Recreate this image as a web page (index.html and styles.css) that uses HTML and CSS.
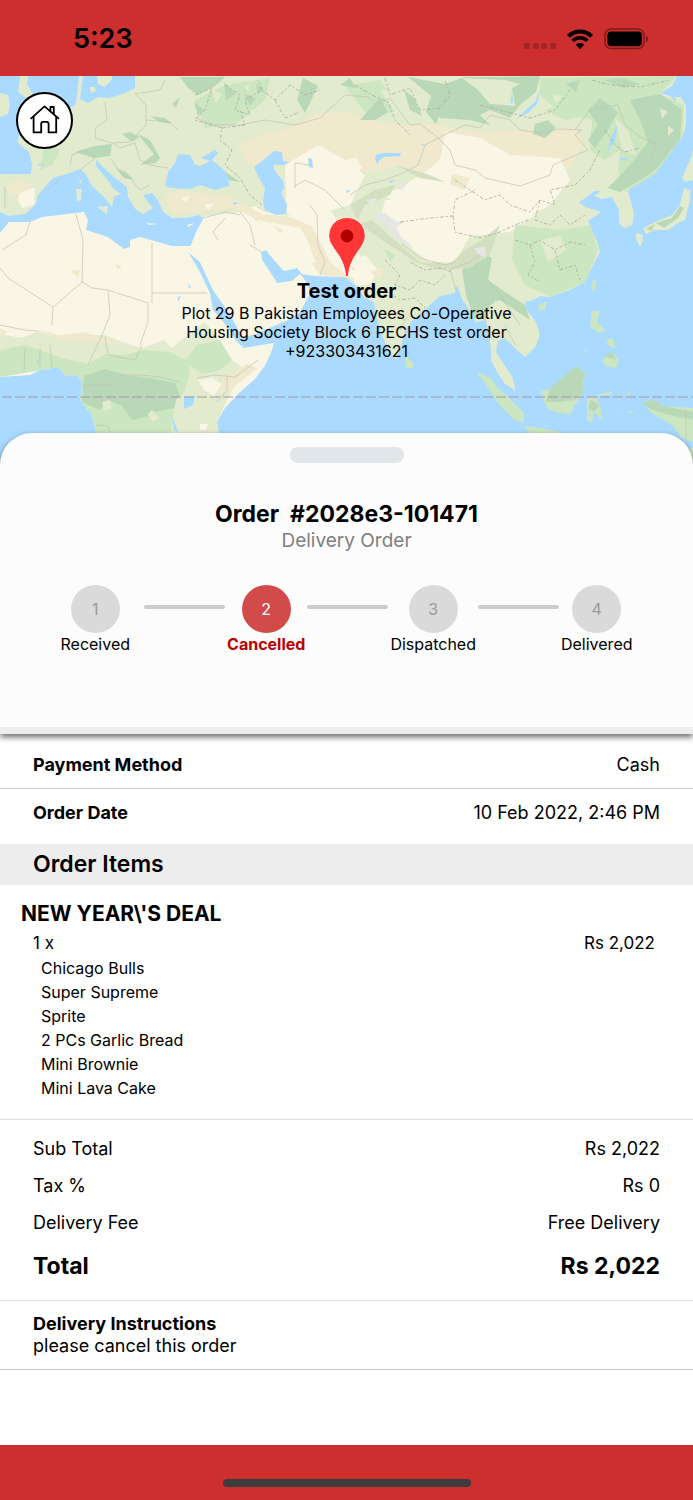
FILE: index.html
```
<!DOCTYPE html>
<html lang="en">
<head>
  <meta charset="utf-8">
  <meta name="viewport" content="width=device-width, initial-scale=1">
  <title>Order Status</title>
  <link rel="stylesheet" href="styles.css">
</head>
<body>
  <header class="status-bar">
    <span class="time">5:23</span>
    <div class="status-icons">
      <svg width="32" height="6" viewBox="0 0 32 6" fill="#a02524">
        <rect x="0" y="0" width="6" height="6" rx="2"/>
        <rect x="9" y="0" width="6" height="6" rx="2"/>
        <rect x="17" y="0" width="6" height="6" rx="2"/>
        <rect x="26" y="0" width="6" height="6" rx="2"/>
      </svg>
      <svg class="wifi" width="28" height="21" viewBox="0 0 28 21">
        <path d="M2.4 7.2C9 .8 19 .8 25.6 7.2" fill="none" stroke="#000" stroke-width="4"/>
        <path d="M6.6 11.8C10.8 7.8 17.2 7.8 21.4 11.8" fill="none" stroke="#000" stroke-width="3.6"/>
        <path d="M9.6 15.6C12.2 13.3 15.8 13.3 18.4 15.6L14 20.2Z"/>
      </svg>
      <svg width="45" height="22" viewBox="0 0 45 22">
        <rect x="1" y="1" width="39" height="19.5" rx="6" fill="none" stroke="#7f1c1b" stroke-width="1.6"/>
        <rect x="3.4" y="3.4" width="34.4" height="14.8" rx="3.6"/>
        <path d="M42 7.4C44.8 8.6 44.8 13 42 14.2Z" fill="#7f1c1b"/>
      </svg>
    </div>
  </header>

  <main>
    <section class="map">
      <svg class="map-image" viewBox="0 76 693 394" preserveAspectRatio="xMidYMin slice">
        <rect x="0" y="76" width="693" height="394" fill="#aadaff"/>

        <!-- Europe and Asia -->
        <path fill="#e2ebce" d="M10 76H677L672 86L661 93L670 96L675 101L681 98L686 105L686 125L682 137L674 148L662 164L654 174L646 178L635 181L628 191L632 205L634 214L632 225L625 228L619 224L619 210L612 197L602 199L594 196L601 191L594 191L587 197L579 202L585 207L601 212L588 221L592 230L598 244L600 252L593 265L585 282L570 290L550 297L540 296L534 300L525 302L526 309L536 322L540 334L536 346L525 357L519 352L505 338L498 341L496 352L505 366L512 376L516 391L505 384L497 372L491 360L491 352L489 335L486 320L476 322L468 308L462 299L457 285L455 293L440 296L430 305L412 321L405 330L401 346L396 359L390 354L382 335L376 315L374 302L364 297L357 287L345 277L315 276L302 274L297 268L284 271L274 260L266 250L261 252L262 260L270 272L277 283L292 281L300 274L307 283L310 293L300 312L288 320L262 331L243 338L232 318L222 303L213 290L200 262L188 252L193 246L203 218L199 215L185 218L172 218L163 212L158 200L152 193L143 195L148 202L153 208L143 214L136 210L128 197L127 187L115 178L104 168L96 160L96 166L106 178L115 190L121 194L114 196L112 207L103 196L92 186L85 173L80 169L70 173L53 178L38 195L36 204L25 214L9 216L0 212V174L31 174L32 164L29 152L17 142L19 136L40 130L60 115L76 104L79 76H10Z"/>

        <!-- Africa -->
        <path fill="#faf6e6" d="M0 233L9 222L30 222L42 217L84 212L88 220L86 230L108 237L124 249L130 247V240L140 237L155 241L172 246L193 246L188 252L200 272L210 293L213 310L226 325L237 342L244 348L274 343L271 353L264 367L255 379L238 394L225 408L217 422L220 440L98 440L92 415L80 400L83 383L77 375L66 376L59 367L40 370L30 375L0 377Z"/>
        <path fill="#e2ebce" d="M0 334L22 338L38 331L58 338L85 335L105 335L128 344L142 348L164 340L172 348L193 330L205 322L222 344L232 360L246 370L232 390L217 422L220 440L98 440L92 415L80 400L83 383L77 375L66 376L59 367L0 377Z"/>
        <path fill="#cbe6c0" d="M0 350L25 345L62 358L88 364L105 354L125 355L145 350L170 352L186 360L197 345L220 340L232 360L220 370L195 376L186 390L175 405L170 440L98 440L92 415L80 400L83 383L77 375L66 376L59 367L0 377Z"/>
        <path fill="#b8d8b8" d="M84 376L105 369L125 375L150 378L175 383L180 396L174 408L155 412L150 416L132 420L122 406L108 400L100 410L82 402Z"/>
        <path fill="#e2ebce" d="M190 366L200 372L212 378L228 372L222 392L216 408L214 440L176 440L172 420L176 400L184 392L188 380ZM102 402L110 400L112 408L104 411ZM148 414L152 410L160 418L152 422Z"/>
        <path fill="#f1e9cd" d="M0 328L8 332L0 336ZM40 330L60 335L85 332L100 338L130 345L100 342L60 340ZM70 271L80 270L78 277ZM115 264L122 266L118 270ZM208 268L222 276L224 292L232 300L224 304L214 290ZM232 374L246 364L258 368L240 382L220 396L222 380Z"/>
        <path fill="#faf6e6" d="M198 380L212 378L222 384L214 396L204 390ZM200 424L208 424L206 430L200 430Z"/>
        <path fill="#aadaff" d="M184 397L195 396L193 405L184 409ZM172 415L178 432L174 430ZM188 283L191 287L189 289ZM178 297L181 296L178 302ZM36 359L39 361L38 366Z"/>

        <!-- deserts and steppe -->
        <path fill="#faf6e6" d="M197 230L205 216L240 212L254 206L265 212L287 216L310 205L330 210L345 232L360 255L365 280L345 277L315 276L302 274L297 268L284 271L274 260L266 250L261 252L262 260L270 272L277 283L292 281L300 274L307 283L310 293L300 312L288 320L262 331L243 338L232 318L222 303L213 290L200 262L188 252Z"/>
        <path fill="#f1e9cd" d="M236 146L262 135L290 128L316 114L346 112L380 122L404 126L430 124L480 132L525 130L575 128L584 144L560 180L545 200L520 215L480 200L430 180L400 165L380 170L350 172L320 165L290 165L255 165Z"/>
        <path fill="#f1e9cd" d="M165 196L180 190L202 194L226 196L240 202L262 214L287 216L312 226L330 262L350 278L320 275L305 255L270 232L250 216L232 208L200 212L174 214L168 206Z"/>
        <path fill="#faf6e6" d="M285 165L318 145L345 160L365 175L350 205L315 215L287 214L286 190ZM445 132L480 138L510 155L560 158L570 180L550 205L525 218L480 220L450 205L400 205L385 195L420 176L440 160ZM385 200L455 195L500 205L535 215L510 232L470 236L455 262L430 262L400 240L380 220ZM258 220L300 228L320 260L300 268L275 255ZM350 262L365 255L378 270L370 285L355 285ZM346 160L356 158L362 168L350 176Z"/>
        <path fill="#f1e9cd" d="M452 174L470 178L464 190L450 184ZM306 236L318 240L326 252L322 270L314 258ZM274 226L284 230L280 234ZM370 272L384 268L380 280Z"/>
        <path fill="#faf6e6" d="M20 190L35 188L34 205L22 208L18 200ZM180 198L190 196L186 202ZM204 204L214 204L208 210Z"/>
        <path fill="#f1e9cd" d="M5 186L18 180L32 184L28 190L14 196ZM240 146L252 138L260 152L248 165Z"/>

        <!-- forests -->
        <path fill="#cbe6c0" d="M195 100L225 85L270 78L265 100L235 125L205 128ZM540 78L677 76L660 94L684 105L682 137L655 174L625 192L618 170L590 150L592 120L560 112L540 95ZM515 225L560 230L590 225L598 250L585 282L550 297L525 285L512 260ZM45 143L60 150L52 165L40 170ZM385 250L370 240L395 255L390 262ZM545 110L580 96L590 115L565 120ZM345 86L380 80L400 110L370 118Z"/>
        <path fill="#b8d8b8" d="M180 77L225 77L215 86L198 95L188 88ZM303 78L318 86L305 113L297 100ZM408 77L445 84L465 77L495 77L540 76L536 92L520 105L510 118L490 110L480 115L490 125L470 120L440 118L430 95ZM535 124L548 120L556 128L545 138L533 134ZM600 98L618 112L608 130L595 148L588 140L598 125L588 110ZM630 100L660 94L682 110L680 140L655 170L640 180L620 192L608 188L630 165L648 142L640 120ZM75 152L95 146L112 144L110 156L94 158ZM138 134L150 140L160 158L156 163L140 165L154 154L144 142ZM150 116L165 118L172 124L160 122ZM180 97L172 104L176 108ZM215 165L240 182L228 180ZM462 270L480 252L492 258L488 280L505 292L525 305L530 320L515 310L500 300L490 305L485 320L474 318L466 295ZM360 120L380 98L388 112L375 120ZM340 85L350 78L356 88ZM224 82L235 94L226 100ZM122 134L130 132L140 137L132 142ZM116 168L126 172L134 180L124 178ZM244 94L256 98L250 106ZM256 84L264 88L258 94ZM194 102L204 110L198 116ZM430 98L442 108L436 124L426 112ZM404 90L414 98L422 116L410 110ZM566 84L580 80L576 92ZM604 80L622 78L640 84L624 88Z"/>
        <path fill="#d3dfc0" d="M350 205L375 190L395 185L390 195L365 205L355 225L372 220L400 245L420 262L450 264L465 250L482 240L500 225L490 255L470 268L440 270L415 262L390 245L360 225ZM395 165L430 175L445 182L420 178Z"/>
        <path fill="#e6e7e2" d="M366 200L378 198L372 205ZM370 213L385 213L396 221L404 222L396 227L402 238L414 248L406 246L392 234L382 223ZM395 188L410 180L402 190ZM474 248L485 247L486 258L478 254Z"/>
        <path fill="#e2ebce" d="M462 78L478 90L490 104L515 106L512 88L520 84L505 80ZM498 118L520 118L508 125ZM605 160L620 150L618 175ZM380 90L395 112L408 108L398 90ZM615 118L628 130L636 155L622 150ZM540 240L560 236L566 250L548 262ZM494 300L508 306L512 322L502 316ZM212 90L222 94L216 104ZM244 86L250 84L248 92ZM660 108L668 112L662 118ZM668 126L674 130L668 136ZM552 94L562 96L556 104Z"/>

        <!-- inner seas and lakes -->
        <path fill="#aadaff" d="M165 186L168 172L175 163L178 154L190 155L194 162L202 165L210 161L201 158L215 150L218 153L212 160L224 170L229 179L229 186L215 190L200 185L190 189L172 188Z"/>
        <path fill="#aadaff" d="M254 167L262 161L274 151L282 152L283 161L290 162L284 165L274 165L273 168L278 175L283 181L284 188L281 193L287 205L286 214L276 215L265 210L263 202L265 188L258 176Z"/>
        <path fill="#aadaff" d="M376 155L383 153L401 153L400 156L384 157L379 160L378 165L375 160ZM541 88L537 104L528 113L516 119L528 108L535 102ZM512 92L513 102L510 104ZM308 158L312 159L313 168L309 167ZM618 123L615 140L607 153L610 140ZM388 181L396 180L391 183ZM421 143L427 146L421 145ZM346 190L350 191L347 193ZM619 158L630 158L622 161ZM233 202L239 203L234 205ZM37 164L45 164L40 166Z"/>
        <path fill="#aadaff" d="M83 76H135V88L125 93L110 98L98 97L88 103L80 99ZM0 92V76H10L12 90L16 100L14 112L17 140L0 130Z"/>
        <path fill="#e2ebce" d="M0 93L8 95L10 104L8 114L0 117ZM97 76H113L110 82L104 87L98 84ZM90 87L95 87L96 91L91 93ZM20 76H28L27 84L34 96L28 99L18 92ZM97 207L108 206L107 214ZM76 189L82 189L81 200L77 201ZM79 180L82 181L80 184ZM192 155L197 160L204 163L200 166L194 164Z"/>
        <path fill="#faf6e6" d="M147 223L158 224L148 225ZM187 225L194 223L189 227Z"/>

        <!-- islands -->
        <path fill="#cbe6c0" d="M476 371L490 378L500 390L512 401L524 413V424L512 418L498 403L488 388ZM541 391L548 390L562 378L576 366L586 374L582 383L584 392L575 405L570 415L555 412L546 407ZM524 426L540 428L560 432L555 434L530 433ZM587 399L600 394L613 391L610 395L595 396L600 405L602 420L594 412L592 422L587 420ZM406 355L414 365L412 369L405 367ZM592 311L600 311L597 322L606 331L600 333L590 327ZM606 340L613 338L616 348L608 345ZM602 360L612 352L619 360L616 368L605 366ZM538 305L547 302L545 310L540 311ZM593 280L597 279L594 291L591 289ZM643 402L655 400L662 406L693 408V442L682 438L672 425L650 412ZM690 448L693 447V460L690 458ZM581 356L588 347L586 352ZM619 412L622 411V413ZM627 411L635 411L628 413ZM626 394L630 392L629 397Z"/>
        <path fill="#b8d8b8" d="M576 366L586 374L582 383L584 392L575 400L560 402L546 402L550 388ZM643 402L655 400L662 406L693 412V420L665 414L648 408ZM591 400L600 405L594 412L588 408ZM604 356L612 352L616 360Z"/>
        <path fill="#e2ebce" d="M684 188L690 190V200L685 220L680 222L668 230L655 230L646 234L643 228L655 222L672 215L680 205ZM636 233L643 235L641 246L636 240ZM685 182L682 178L690 160L693 150V180ZM674 97L682 97L679 102ZM637 240L643 240L640 247Z"/>
        <path fill="#b8d8b8" d="M656 223L672 218L680 206L684 208L678 218L664 228ZM646 229L655 224L652 231Z"/>

        <!-- country borders -->
        <g fill="none" stroke="#c3c2b2" stroke-width=".7">
          <path d="M76 214L83 240L82 282L58 303L53 307L52 325M0 268L8 278L53 307M152 243V303M152 293H207M148 303V322L140 345M30 222L26 235L2 250M82 282L92 288L108 290L148 303M108 290L110 315L102 335L88 365M105 337L108 355L135 360L142 345M0 325L25 330L38 331M25 348L24 372M40 348V368M50 345L52 368M82 385H115M120 375L140 375L160 377L180 382M197 378L215 375L235 377M227 377V390L217 402M235 377L258 360M96 425L108 426L110 432"/>
          <path d="M105 102L107 120L96 127L95 138L112 143L130 142L146 125V105L135 94M146 120L170 122L178 130M113 143L120 148L135 143L140 160L150 165L168 168M110 158L122 175L130 178L140 190L150 185M70 165L72 155L85 150L95 158L80 170M135 94L160 90L165 80M60 178L48 190M5 186L5 208M195 118L215 125L240 125L265 120L295 125L320 118L345 95M203 218L225 212L240 215M218 240L213 232L225 218M240 212L250 225L255 245M250 245L262 252M310 205L317 215L318 245L325 262L320 275M295 188V163L310 165M295 186L305 180L325 190L345 210M345 232L352 245L346 262L355 270"/>
          <path d="M346 95L368 97L376 105L390 98L410 125L420 124L436 136L450 150L455 165L475 170L485 178L520 186L550 175L553 165L588 150L575 135L582 130L560 129L540 133L520 130L510 120L490 115L480 128L465 125L440 137L425 145L418 165L405 172L385 180L365 185L350 195M575 130L590 110L618 105L625 125L640 137L656 143L650 165M402 244L420 258L445 265L455 262M456 290L450 270L470 262L480 255M488 280L500 295L510 310L520 325M505 325L515 345M686 410V440"/>
        </g>
        <g fill="none" stroke="#a9ab9d" stroke-width=".8" stroke-dasharray="4 2 2 2">
          <path d="M195 95L212 88L205 110L195 120L222 128L220 140L232 150L225 165L240 178L250 195L262 205M225 85L240 95L235 110L250 115L245 100L262 90L275 100L290 85L305 95L320 90M222 128L245 125L240 110M262 90L258 80M275 100L285 118L300 112M355 85L372 95L388 102L395 120L410 135M385 78L390 95L410 88L420 110L440 108L450 95L445 80M480 105L500 110L530 118L555 110L570 90M592 80L610 85L640 87L670 80"/>
          <path d="M455 180L470 190L485 200L500 195L510 205L530 212L540 200L555 205L550 190L575 185L590 170L600 150M400 222L430 218L453 216L455 200L475 190M453 216L455 232L480 238L500 232L515 225L528 220M540 200L535 220L550 225L560 215L570 225L585 215M515 240L530 245L540 240L555 250L570 242L585 245M530 245L535 262L528 275L540 282M555 250L560 270L575 265L580 280M385 260L400 275L395 285L410 290L420 280L435 285L445 275M385 290L400 300L415 298L425 308M395 312L405 320L400 330M410 262L425 270L440 268L452 272M605 130L615 145L625 152L640 148"/>
        </g>
        <path d="M2 397H693" fill="none" stroke="#a495a8" stroke-width="1" stroke-dasharray="10 3"/>
      </svg>

      <button class="home-button" type="button" aria-label="Home">
        <svg width="30" height="29" viewBox="0 0 30 29" fill="none" stroke="#000" stroke-width="1.8" stroke-linejoin="round" stroke-linecap="round">
          <path d="M1.2 13.4L14.5 1.4L28.4 13.4"/>
          <path d="M3.6 11.6V27.4H11.2V19C11.2 17.6 12 16.8 13.2 16.8H16.6C17.8 16.8 18.6 17.6 18.6 19V27.4H26.2V11.6"/>
          <path d="M20.4 6V2H23.8V9.2"/>
        </svg>
      </button>

      <div class="marker">
        <svg width="38" height="60" viewBox="0 0 38 60">
          <path d="M19 .5C8.6.5.8 8.6.8 18.6C.8 25.6 5.4 30.6 9.4 36.4C13.2 42 17 49.2 17.6 59.5H20.4C21 49.2 24.8 42 28.6 36.4C32.6 30.6 37.2 25.6 37.2 18.6C37.2 8.6 29.4.5 19 .5Z" fill="#ff3837" stroke="#fff" stroke-width=".8"/>
          <circle cx="19" cy="19" r="6.4" fill="#b30000"/>
        </svg>
        <h1>Test order</h1>
        <p>Plot 29 B Pakistan Employees Co-Operative<br>Housing Society Block 6 PECHS test order<br>+923303431621</p>
      </div>
    </section>

    <section class="order-card">
      <div class="drag-handle"></div>
      <h2>Order&nbsp; #2028e3-101471</h2>
      <p class="order-type">Delivery Order</p>
      <ol class="steps">
        <li class="step"><span class="circle">1</span>Received</li>
        <li class="line" aria-hidden="true"></li>
        <li class="step active"><span class="circle">2</span>Cancelled</li>
        <li class="line" aria-hidden="true"></li>
        <li class="step"><span class="circle">3</span>Dispatched</li>
        <li class="line" aria-hidden="true"></li>
        <li class="step"><span class="circle">4</span>Delivered</li>
      </ol>
    </section>

    <dl class="details">
      <div class="row">
        <dt>Payment Method</dt>
        <dd>Cash</dd>
      </div>
      <div class="row">
        <dt>Order Date</dt>
        <dd>10 Feb 2022, 2:46 PM</dd>
      </div>
    </dl>

    <h2 class="section-title">Order Items</h2>

    <section class="item">
      <h3>NEW YEAR\'S DEAL</h3>
      <div class="item-price">
        <span>1 x</span>
        <span>Rs 2,022</span>
      </div>
      <ul>
        <li>Chicago Bulls</li>
        <li>Super Supreme</li>
        <li>Sprite</li>
        <li>2 PCs Garlic Bread</li>
        <li>Mini Brownie</li>
        <li>Mini Lava Cake</li>
      </ul>
    </section>

    <section class="totals">
      <table>
        <tr>
          <th scope="row">Sub Total</th>
          <td>Rs 2,022</td>
        </tr>
        <tr>
          <th scope="row">Tax %</th>
          <td>Rs 0</td>
        </tr>
        <tr>
          <th scope="row">Delivery Fee</th>
          <td>Free Delivery</td>
        </tr>
        <tr class="grand-total">
          <th scope="row">Total</th>
          <td>Rs 2,022</td>
        </tr>
      </table>
    </section>

    <section class="instructions">
      <h3>Delivery Instructions</h3>
      <p>please cancel this order</p>
    </section>
  </main>

  <footer class="bottom-bar">
    <div class="home-indicator"></div>
  </footer>
</body>
</html>
```
FILE: styles.css
```
* {
  box-sizing: border-box;
}

body {
  margin: 0;
  min-height: 100vh;
  display: flex;
  flex-direction: column;
  background-color: #fff;
  color: #000;
  font-family: Inter, "Liberation Sans", sans-serif;
  font-size: 18px;
  line-height: 22px;
}

h1, h2, h3, p, ul, ol, dl, dd {
  margin: 0;
  padding: 0;
}

ul, ol {
  list-style: none;
}

svg {
  display: block;
}

main {
  flex: 1;
}

/* status bar */
.status-bar {
  display: flex;
  justify-content: space-between;
  align-items: center;
  padding: 22px 44px 20px 73px;
  background-color: #cd2e2e;
}

.time {
  font-size: 27px;
  font-weight: 600;
  line-height: 34px;
}

.status-icons {
  display: flex;
  align-items: center;
  gap: 10px;
}

.status-icons svg:first-child {
  margin-top: 14px;
}

/* map */
.map {
  position: relative;
  min-height: 394px;
  padding-top: 141px;
  overflow: hidden;
  background-color: #aadaff;
}

.map-image {
  position: absolute;
  top: 0;
  left: 0;
  width: 100%;
  height: 100%;
}

.home-button {
  position: absolute;
  top: 16px;
  left: 16px;
  width: 57px;
  height: 57px;
  display: flex;
  align-items: center;
  justify-content: center;
  padding: 0 0 2px;
  background-color: #fff;
  border: 2px solid #000;
  border-radius: 50%;
  cursor: pointer;
}

.marker {
  position: relative;
  display: flex;
  flex-direction: column;
  align-items: center;
  text-align: center;
}

.marker h1 {
  margin-top: 2px;
  font-size: 20px;
  font-weight: 700;
  line-height: 25px;
}

.marker p {
  font-size: 16px;
  line-height: 19px;
}

/* order card */
.order-card {
  position: relative;
  margin-top: -37px;
  padding: 14px 16px 72px;
  background-color: #fcfcfc;
  border-bottom: 7px solid #eee;
  border-radius: 32px 32px 0 0;
  box-shadow: 0 3px 6px rgba(0, 0, 0, 0.6);
  text-align: center;
}

.drag-handle {
  width: 114px;
  height: 16px;
  margin: 0 auto 37px;
  background-color: #e1e6ea;
  border-radius: 8px;
}

.order-card h2 {
  font-size: 23px;
  font-weight: 700;
  line-height: 28px;
}

.order-type {
  color: #808080;
  font-size: 19px;
  line-height: 25px;
}

.steps {
  display: flex;
  justify-content: center;
  margin-top: 32px;
  font-size: 16px;
}

.step {
  display: flex;
  flex-direction: column;
  align-items: center;
  padding: 0 2px;
}

.step:first-child {
  margin-right: 12px;
}

.circle {
  width: 49px;
  height: 48px;
  border-radius: 50%;
  background-color: #dadada;
  color: #999;
  line-height: 48px;
}

.active {
  color: #bb0000;
  font-weight: 700;
}

.active .circle {
  background-color: #d14b4b;
  color: #fff;
  font-weight: 400;
}

.line {
  width: 81px;
  height: 4px;
  margin-top: 20px;
  background-color: #ccc;
  border-radius: 2px;
}

/* payment details */
.row {
  display: flex;
  justify-content: space-between;
  padding: 13px 33px;
}

.row:first-child {
  padding: 20px 33px 12px;
  border-bottom: 1px solid #ccc;
}

.row:last-child {
  padding-bottom: 20px;
}

.row dt {
  font-weight: 700;
}

.section-title {
  padding: 6px 33px 7px;
  background-color: #ededed;
  font-size: 23px;
  font-weight: 600;
  line-height: 28px;
}

/* order items */
.item {
  padding: 16px 38px 19px 33px;
  border-bottom: 1px solid #ddd;
}

.item h3 {
  margin-left: -12px;
  font-size: 21px;
  font-weight: 700;
  line-height: 25px;
}

.item-price {
  display: flex;
  justify-content: space-between;
  padding: 6px 0 2px;
  font-size: 17px;
}

.item ul {
  padding-left: 8px;
  font-size: 16px;
  line-height: 24px;
}

/* totals */
.totals {
  padding: 11px 33px 10px;
  border-bottom: 1px solid #ddd;
}

.totals table {
  width: 100%;
  border-collapse: collapse;
}

.totals th, .totals td {
  padding: 7px 0 8px;
  font-weight: 400;
  text-align: left;
}

.totals td {
  text-align: right;
}

.totals .grand-total th, .totals .grand-total td {
  padding: 10px 0;
  font-size: 23px;
  font-weight: 700;
  line-height: 28px;
}

/* delivery instructions */
.instructions {
  padding: 12px 33px;
  border-bottom: 1px solid #ccc;
}

.instructions h3 {
  font-size: 18px;
  font-weight: 700;
}

/* bottom bar */
.bottom-bar {
  padding: 34px 0 13px;
  background-color: #cd2e2e;
}

.home-indicator {
  width: 248px;
  height: 8px;
  margin: 0 auto;
  background-color: #3c3c3c;
  border-radius: 4px;
}
```
